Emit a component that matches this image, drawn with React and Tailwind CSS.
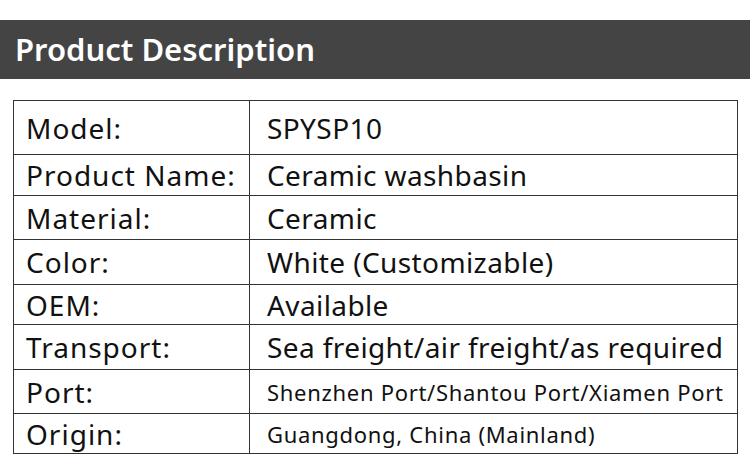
import React from 'react';

const rows = [
  { label: 'Model:', value: 'SPYSP10', h: 'h-[53px]', small: false },
  { label: 'Product Name:', value: 'Ceramic washbasin', h: 'h-[41px]', small: false },
  { label: 'Material:', value: 'Ceramic', h: 'h-[44px]', small: false },
  { label: 'Color:', value: 'White (Customizable)', h: 'h-[45px]', small: false },
  { label: 'OEM:', value: 'Available', h: 'h-[40px]', small: false },
  { label: 'Transport:', value: 'Sea freight/air freight/as required', h: 'h-[45px]', small: false },
  { label: 'Port:', value: 'Shenzhen Port/Shantou Port/Xiamen Port', h: 'h-[44px]', small: true },
  { label: 'Origin:', value: 'Guangdong, China (Mainland)', h: 'h-[40px]', small: true },
];

export default function App() {
  return (
    <div className="w-[750px] h-[475px] bg-white pt-5 font-['Noto_Sans',sans-serif] text-[#111]">
      <div className="h-[59px] bg-[#444444] flex items-center px-[15px]">
        <h1 className="text-white text-[31px] font-semibold leading-none">Product Description</h1>
      </div>
      <div className="mt-[21px] ml-[13px] w-[725px] border-[1.5px] border-[#333]">
        {rows.map((r, i) => (
          <div
            key={r.label}
            className={`grid grid-cols-[236px_1fr] ${r.h} ${i > 0 ? 'border-t-[1.5px] border-[#333]' : ''}`}
          >
            <div className="flex items-center pl-[12px] text-[28px] tracking-[1px] leading-none border-r-[1.5px] border-[#333]">
              {r.label}
            </div>
            <div
              className={`flex items-center pl-[17px] leading-none ${
                r.small ? 'text-[22px] tracking-[0.7px]' : 'text-[28px] tracking-[0.4px]'
              }`}
            >
              {r.value}
            </div>
          </div>
        ))}
      </div>
    </div>
  );
}
